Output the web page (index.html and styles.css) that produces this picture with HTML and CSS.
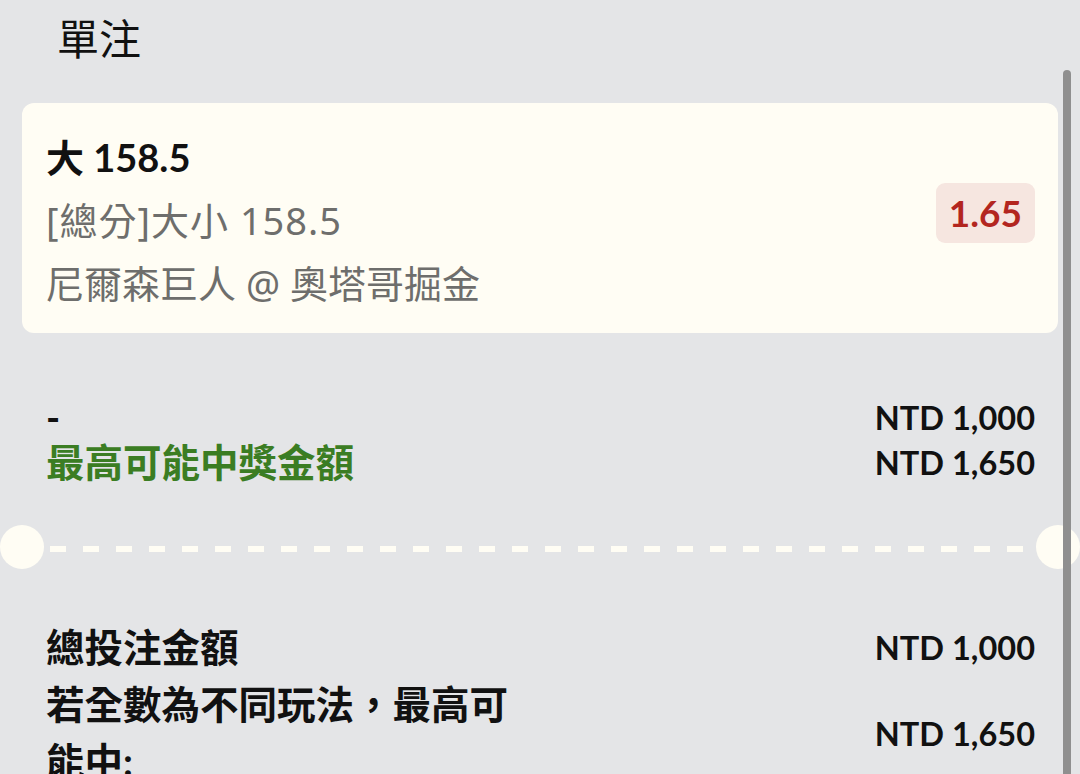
FILE: index.html
```html
<!DOCTYPE html>
<html lang="zh-Hant">
<head>
<meta charset="utf-8">
<title>單注</title>
<link rel="stylesheet" href="styles.css">
</head>
<body>
<div class="page">
  <h1 class="title">單注</h1>
  <div class="card">
    <div class="card-info">
      <div class="sel">大 158.5</div>
      <div class="sub market">[總分]大小 158.5</div>
      <div class="sub">尼爾森巨人 @ 奧塔哥掘金</div>
    </div>
    <div class="odds">1.65</div>
  </div>

  <div class="stake">
    <div class="stake-labels">
      <div class="dash">-</div>
      <div class="win">最高可能中獎金額</div>
    </div>
    <div class="stake-values">
      <div class="amt">NTD 1,000</div>
      <div class="amt">NTD 1,650</div>
    </div>
  </div>

  <div class="divider">
    <span class="hole"></span>
    <span class="dashes"></span>
    <span class="hole"></span>
  </div>

  <div class="summary">
    <div class="sum-row">
      <div class="sum-label">總投注金額</div>
      <div class="amt">NTD 1,000</div>
    </div>
    <div class="sum-row">
      <div class="sum-label narrow">若全數為不同玩法，最高可能中:</div>
      <div class="amt">NTD 1,650</div>
    </div>
  </div>
</div>
<div class="scrollbar"></div>
</body>
</html>
```
FILE: styles.css
```css
html, body {
  margin: 0;
  padding: 0;
}
body {
  background: #e4e5e7;
  font-family: Lato, "Noto Sans CJK TC", sans-serif;
  color: #111;
  width: 1080px;
  height: 774px;
  overflow: hidden;
}
.page {
  display: flex;
  flex-direction: column;
}
.title {
  margin: 16px 0 0 57px;
  font-size: 42px;
  line-height: 42px;
  font-weight: 400;
  font-family: "Noto Sans CJK TC", sans-serif;
  color: #111;
}
.card {
  margin: 45px 22px 0 22px;
  background: #fffdf4;
  border-radius: 12px;
  padding: 23px 23px 18px 24px;
  display: flex;
  justify-content: space-between;
  align-items: center;
}
.card-info {
  display: flex;
  flex-direction: column;
}
.sel {
  font-size: 38px;
  line-height: 63px;
  font-weight: 700;
  color: #111;
}
.sub {
  font-family: "Noto Sans", "Noto Sans CJK TC", sans-serif;
  font-size: 38px;
  line-height: 63px;
  font-weight: 400;
  color: #6e6e6c;
}
.sub.market {
  letter-spacing: 1px;
}
.odds {
  background: #f6e6e0;
  color: #b3261f;
  font-weight: 700;
  font-size: 37px;
  line-height: 60px;
  height: 60px;
  padding: 0 13px;
  border-radius: 9px;
  margin-bottom: 16px;
}
.stake {
  margin: 62px 45px 0 46px;
  display: flex;
  justify-content: space-between;
}
.stake-labels, .stake-values {
  display: flex;
  flex-direction: column;
}
.stake-values {
  align-items: flex-end;
}
.dash {
  font-size: 38px;
  line-height: 45px;
  font-weight: 700;
}
.win {
  font-size: 38.5px;
  line-height: 45px;
  font-weight: 700;
  color: #3b7d23;
}
.amt {
  font-size: 32.5px;
  line-height: 45px;
  font-weight: 700;
  color: #111;
}
.divider {
  margin-top: 40px;
  display: flex;
  align-items: center;
  gap: 6px;
}
.hole {
  width: 44px;
  height: 44px;
  border-radius: 50%;
  background: #fffdf4;
  flex: none;
}
.dashes {
  flex: 1;
  height: 6px;
  margin-top: 4px;
  background: repeating-linear-gradient(to right, #fffdf4 0, #fffdf4 16px, transparent 16px, transparent 33px);
}
.summary {
  margin: 50px 45px 0 46px;
  display: flex;
  flex-direction: column;
}
.sum-row {
  display: flex;
  justify-content: space-between;
  align-items: center;
}
.sum-label {
  font-size: 38.5px;
  line-height: 57px;
  font-weight: 700;
  color: #111;
}
.sum-label.narrow {
  width: 480px;
}
.scrollbar {
  position: absolute;
  left: 1063px;
  top: 70px;
  width: 8px;
  height: 720px;
  background: #8f8f8f;
  border-radius: 4px 4px 0 0;
}
```
